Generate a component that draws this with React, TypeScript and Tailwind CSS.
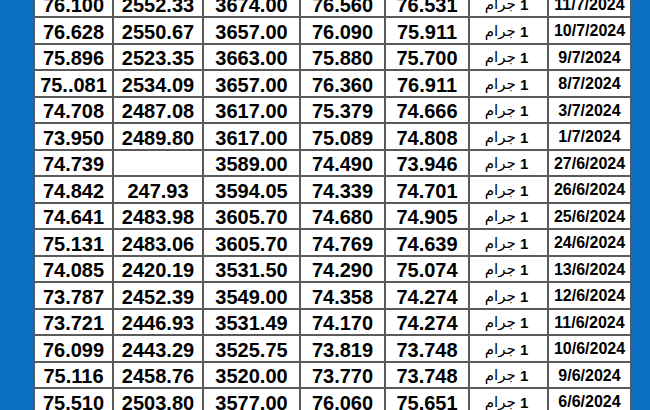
import * as React from "react";

/* ---------- Data ---------- */

type Row = [string, string, string, string, string, string];

const ROWS: Row[] = [
  ["76.100", "2552.33", "3674.00", "76.560", "76.531", "11/7/2024"],
  ["76.628", "2550.67", "3657.00", "76.090", "75.911", "10/7/2024"],
  ["75.896", "2523.35", "3663.00", "75.880", "75.700", "9/7/2024"],
  ["75..081", "2534.09", "3657.00", "76.360", "76.911", "8/7/2024"],
  ["74.708", "2487.08", "3617.00", "75.379", "74.666", "3/7/2024"],
  ["73.950", "2489.80", "3617.00", "75.089", "74.808", "1/7/2024"],
  ["74.739", "", "3589.00", "74.490", "73.946", "27/6/2024"],
  ["74.842", "247.93", "3594.05", "74.339", "74.701", "26/6/2024"],
  ["74.641", "2483.98", "3605.70", "74.680", "74.905", "25/6/2024"],
  ["75.131", "2483.06", "3605.70", "74.769", "74.639", "24/6/2024"],
  ["74.085", "2420.19", "3531.50", "74.290", "75.074", "13/6/2024"],
  ["73.787", "2452.39", "3549.00", "74.358", "74.274", "12/6/2024"],
  ["73.721", "2446.93", "3531.49", "74.170", "74.274", "11/6/2024"],
  ["76.099", "2443.29", "3525.75", "73.819", "73.748", "10/6/2024"],
  ["75.116", "2458.76", "3520.00", "73.770", "73.748", "9/6/2024"],
  ["75.510", "2503.80", "3577.00", "76.060", "75.651", "6/6/2024"],
];

const num =
  "flex items-center justify-center bg-white pt-[3px] text-[20px] font-bold leading-none text-black";

export default function App() {
  return (
    <div
      className="h-screen w-full overflow-hidden bg-[#0a6fc0] pl-[33px]"
      style={{ fontFamily: '"Liberation Sans", Arial, "DejaVu Sans", sans-serif' }}
    >
      <div className="-mt-[10.5px] grid w-[599px] grid-cols-[77px_88px_95px_83px_82px_77px_81px] auto-rows-[24.5px] gap-[2px] border-2 border-[#5a5a5a] bg-[#5a5a5a]">
        {ROWS.map((r, i) => (
          <React.Fragment key={i}>
            <div className={num}>{r[0]}</div>
            <div className={num}>{r[1]}</div>
            <div className={num}>{r[2]}</div>
            <div className={num}>{r[3]}</div>
            <div className={num}>{r[4]}</div>
            <div
              dir="rtl"
              className="flex items-center justify-center bg-white pt-[2px] pr-[4px] text-[15px] leading-none text-black"
              style={{ fontFamily: '"Liberation Sans", "DejaVu Sans", sans-serif' }}
            >
              <span className="font-bold">1</span>&nbsp;
              <span style={{ fontFamily: '"DejaVu Sans", sans-serif' }}>جرام</span>
            </div>
            <div className="flex items-center justify-center bg-white pt-[2px] text-[16px] font-bold leading-none text-black">
              {r[5]}
            </div>
          </React.Fragment>
        ))}
      </div>
    </div>
  );
}
